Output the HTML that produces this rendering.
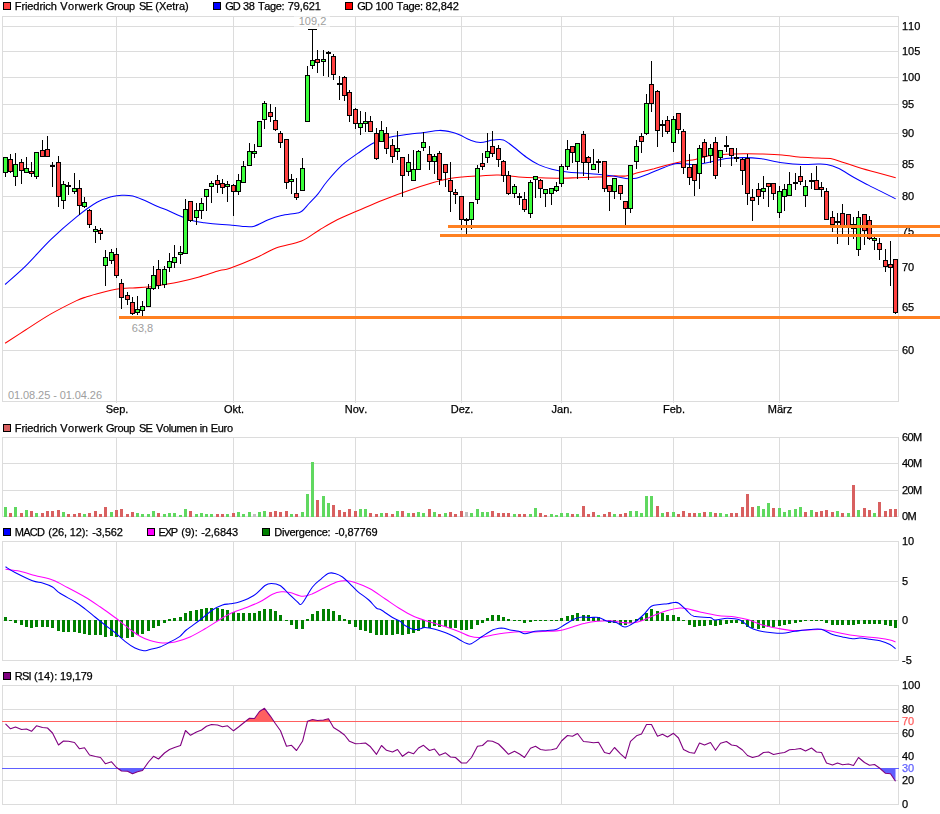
<!DOCTYPE html>
<html><head><meta charset="utf-8"><title>Chart</title>
<style>html,body{margin:0;padding:0;background:#fff}svg{display:block}text{font-family:"Liberation Sans",sans-serif;font-size:11px;fill:#000;font-kerning:none}.g{fill:#9e9e9e;stroke:none}.k{stroke:#000;stroke-width:.25px}</style></head><body>
<svg width="940" height="814" viewBox="0 0 940 814">
<rect width="940" height="814" fill="#fff"/>
<g shape-rendering="crispEdges"><rect x="2" y="26" width="897" height="1" fill="#dcdcdc"/><rect x="2" y="51" width="897" height="1" fill="#dcdcdc"/><rect x="2" y="77" width="897" height="1" fill="#dcdcdc"/><rect x="2" y="104" width="897" height="1" fill="#dcdcdc"/><rect x="2" y="133" width="897" height="1" fill="#dcdcdc"/><rect x="2" y="164" width="897" height="1" fill="#dcdcdc"/><rect x="2" y="196" width="897" height="1" fill="#dcdcdc"/><rect x="2" y="231" width="897" height="1" fill="#dcdcdc"/><rect x="2" y="267" width="897" height="1" fill="#dcdcdc"/><rect x="2" y="307" width="897" height="1" fill="#dcdcdc"/><rect x="2" y="350" width="897" height="1" fill="#dcdcdc"/><rect x="116" y="16" width="1" height="387" fill="#dcdcdc"/><rect x="233" y="16" width="1" height="387" fill="#dcdcdc"/><rect x="355" y="16" width="1" height="387" fill="#dcdcdc"/><rect x="461" y="16" width="1" height="387" fill="#dcdcdc"/><rect x="561" y="16" width="1" height="387" fill="#dcdcdc"/><rect x="673" y="16" width="1" height="387" fill="#dcdcdc"/><rect x="779" y="16" width="1" height="387" fill="#dcdcdc"/><rect x="2" y="16" width="897" height="1" fill="#dcdcdc"/><rect x="2" y="401" width="897" height="1" fill="#dcdcdc"/><rect x="2" y="16" width="1" height="386" fill="#dcdcdc"/><rect x="898" y="16" width="1" height="386" fill="#dcdcdc"/></g>
<text class="g" x="8" y="399" textLength="94" lengthAdjust="spacing">01.08.25 - 01.04.26</text>
<path fill="none" stroke="#ff0000" stroke-width="1.05" d="M5.1,343.3C8.5,341.1 17.9,334.9 25.5,330.0C33.1,325.1 42.5,318.8 51.0,313.9C59.5,309.0 70.6,303.5 76.6,300.6C82.6,297.8 82.5,298.2 86.8,296.8C91.0,295.4 97.0,293.8 102.1,292.5C107.2,291.2 112.3,289.9 117.4,289.1C122.5,288.3 127.7,288.2 132.8,287.9C137.9,287.6 143.0,287.6 148.1,287.1C153.2,286.6 158.3,285.7 163.4,284.8C168.5,283.9 172.8,283.3 178.7,282.0C184.6,280.7 192.3,278.8 199.1,276.9C205.9,275.0 214.4,271.9 219.6,270.5C224.8,269.1 224.0,270.4 230.0,268.3C236.0,266.2 247.8,261.5 255.5,258.1C263.2,254.7 268.3,250.8 276.0,247.9C283.7,245.1 294.3,244.0 301.5,241.0C308.7,238.0 313.4,233.5 319.4,230.0C325.3,226.5 330.8,223.0 337.2,219.8C343.6,216.6 350.0,214.1 357.7,210.8C365.4,207.5 374.7,203.3 383.2,199.9C391.7,196.5 400.2,193.3 408.7,190.4C417.2,187.5 427.4,184.3 434.2,182.3C441.0,180.3 444.9,179.3 449.6,178.4C454.3,177.5 457.2,177.3 462.3,176.9C467.4,176.5 474.4,176.2 480.4,175.9C486.4,175.6 491.9,174.9 498.3,175.1C504.7,175.3 512.3,176.5 518.7,176.9C525.1,177.3 530.2,177.5 536.6,177.7C543.0,177.9 550.2,178.2 557.0,178.2C563.8,178.2 570.6,177.9 577.4,177.7C584.2,177.5 591.9,177.4 597.9,177.1C603.9,176.8 608.5,176.1 613.2,175.9C617.9,175.7 621.6,176.5 625.9,175.9C630.1,175.3 634.0,173.7 638.7,172.5C643.4,171.3 648.9,170.0 654.0,168.7C659.1,167.3 664.3,165.7 669.4,164.4C674.5,163.1 680.4,161.9 684.7,161.1C689.0,160.3 691.0,160.3 695.3,159.4C699.6,158.5 705.5,156.3 710.6,155.5C715.7,154.7 720.5,154.6 726.0,154.3C731.5,154.0 737.8,153.8 743.8,153.7C749.8,153.6 755.3,153.8 761.7,154.0C768.1,154.2 775.3,154.4 782.1,155.0C788.9,155.6 796.5,156.8 802.5,157.3C808.5,157.8 813.2,157.9 817.9,158.1C822.6,158.3 826.4,157.9 830.6,158.6C834.9,159.3 838.7,160.9 843.4,162.4C848.1,163.9 853.2,165.8 858.7,167.5C864.2,169.2 870.4,170.9 876.6,172.6C882.8,174.3 892.5,176.8 895.7,177.7"/>
<path fill="none" stroke="#0000ff" stroke-width="1.05" d="M5.1,284.5C8.5,281.4 17.9,273.7 25.5,266.2C33.1,258.7 42.5,247.6 51.0,239.4C59.5,231.2 68.9,223.1 76.6,216.9C84.3,210.7 91.0,205.7 97.0,202.3C103.0,198.9 108.0,197.7 112.3,196.5C116.5,195.3 119.1,195.3 122.5,195.2C125.9,195.1 129.4,195.2 132.8,196.0C136.2,196.8 138.8,198.0 143.0,199.8C147.2,201.6 154.1,204.9 158.3,206.7C162.6,208.5 164.7,209.2 168.5,210.8C172.3,212.4 177.1,214.7 181.3,216.4C185.6,218.1 190.2,219.9 194.0,221.0C197.8,222.1 199.5,222.2 204.2,222.8C208.9,223.4 217.8,224.2 222.1,224.5C226.4,224.8 226.6,224.6 230.0,224.9C233.4,225.2 238.8,226.2 242.8,226.4C246.9,226.6 250.1,227.3 254.3,226.2C258.6,225.1 263.8,221.6 268.3,219.8C272.8,218.0 276.6,216.7 281.4,215.6C286.2,214.5 293.8,213.8 297.2,213.0C300.6,212.2 300.1,212.6 302.1,211.0C304.1,209.4 306.4,206.3 309.0,203.5C311.6,200.7 314.8,197.8 317.8,194.1C320.8,190.4 322.9,186.4 327.0,181.5C331.1,176.6 337.2,169.6 342.3,164.9C347.4,160.2 352.6,157.0 357.7,153.4C362.8,149.8 367.9,145.8 373.0,143.2C378.1,140.6 382.4,139.1 388.3,137.6C394.2,136.1 402.8,135.2 408.7,134.3C414.6,133.5 418.9,133.2 424.0,132.5C429.1,131.8 434.7,130.5 439.4,130.4C444.1,130.3 448.7,131.4 452.1,132.2C455.5,133.0 457.0,133.7 460.0,135.0C463.0,136.3 466.8,138.9 470.2,140.1C473.6,141.3 476.6,142.4 480.4,142.4C484.2,142.4 489.4,140.5 493.2,140.1C497.0,139.7 500.0,138.8 503.4,139.9C506.8,141.1 509.8,144.1 513.6,147.0C517.4,149.9 522.1,154.2 526.4,157.2C530.6,160.2 534.9,162.9 539.1,164.9C543.4,166.9 547.2,168.0 551.9,169.2C556.6,170.4 562.1,171.3 567.2,172.0C572.3,172.7 577.4,172.7 582.5,173.1C587.6,173.5 592.8,173.8 597.9,174.3C603.0,174.8 608.5,175.2 613.2,175.9C617.9,176.6 622.1,178.0 625.9,178.4C629.7,178.8 632.4,179.0 636.2,178.2C640.0,177.4 644.2,175.6 648.9,173.8C653.6,172.0 659.5,169.1 664.2,167.4C668.9,165.7 672.7,164.1 677.0,163.6C681.3,163.1 686.8,164.2 689.8,164.4C692.8,164.6 691.8,164.9 695.3,164.5C698.8,164.1 705.5,162.9 710.6,161.9C715.7,160.9 720.5,159.3 726.0,158.6C731.5,157.9 737.8,157.6 743.8,157.6C749.8,157.6 755.3,158.0 761.7,158.8C768.1,159.7 775.3,161.8 782.1,162.7C788.9,163.6 796.5,164.3 802.5,164.5C808.5,164.7 813.9,164.0 817.9,164.0C821.9,164.0 823.4,163.8 826.8,164.5C830.2,165.2 833.8,166.2 838.3,168.3C842.8,170.4 848.5,174.3 853.6,177.2C858.7,180.0 863.8,182.8 868.9,185.4C874.0,188.1 879.8,190.8 884.3,193.1C888.8,195.3 893.8,197.9 895.7,198.9"/>
<g shape-rendering="crispEdges"><rect x="5" y="157" width="1" height="20" fill="#000"/><rect x="3" y="157" width="5" height="16" fill="#000"/><rect x="4" y="158" width="3" height="14" fill="#3cff3c"/><rect x="10" y="154" width="1" height="19" fill="#000"/><rect x="8" y="159" width="5" height="13" fill="#000"/><rect x="9" y="160" width="3" height="11" fill="#ff4040"/><rect x="15" y="153" width="1" height="33" fill="#000"/><rect x="13" y="164" width="5" height="13" fill="#000"/><rect x="14" y="165" width="3" height="11" fill="#3cff3c"/><rect x="21" y="159" width="1" height="25" fill="#000"/><rect x="19" y="162" width="5" height="9" fill="#000"/><rect x="20" y="163" width="3" height="7" fill="#ff4040"/><rect x="26" y="157" width="1" height="16" fill="#000"/><rect x="24" y="168" width="5" height="5" fill="#000"/><rect x="25" y="169" width="3" height="3" fill="#3cff3c"/><rect x="31" y="162" width="1" height="15" fill="#000"/><rect x="29" y="171" width="5" height="3" fill="#000"/><rect x="30" y="172" width="3" height="1" fill="#ff4040"/><rect x="36" y="152" width="1" height="27" fill="#000"/><rect x="34" y="152" width="5" height="25" fill="#000"/><rect x="35" y="153" width="3" height="23" fill="#3cff3c"/><rect x="42" y="140" width="1" height="17" fill="#000"/><rect x="40" y="150" width="5" height="7" fill="#000"/><rect x="41" y="151" width="3" height="5" fill="#ff4040"/><rect x="47" y="136" width="1" height="21" fill="#000"/><rect x="45" y="149" width="5" height="8" fill="#000"/><rect x="46" y="150" width="3" height="6" fill="#ff4040"/><rect x="52" y="162" width="1" height="25" fill="#000"/><rect x="50" y="165" width="5" height="2" fill="#000"/><rect x="58" y="156" width="1" height="51" fill="#000"/><rect x="56" y="162" width="5" height="35" fill="#000"/><rect x="57" y="163" width="3" height="33" fill="#ff4040"/><rect x="63" y="181" width="1" height="28" fill="#000"/><rect x="61" y="184" width="5" height="17" fill="#000"/><rect x="62" y="185" width="3" height="15" fill="#3cff3c"/><rect x="68" y="182" width="1" height="13" fill="#000"/><rect x="66" y="185" width="5" height="2" fill="#000"/><rect x="74" y="173" width="1" height="21" fill="#000"/><rect x="72" y="188" width="5" height="4" fill="#000"/><rect x="73" y="189" width="3" height="2" fill="#3cff3c"/><rect x="79" y="180" width="1" height="35" fill="#000"/><rect x="77" y="188" width="5" height="18" fill="#000"/><rect x="78" y="189" width="3" height="16" fill="#ff4040"/><rect x="84" y="197" width="1" height="11" fill="#000"/><rect x="82" y="202" width="5" height="5" fill="#000"/><rect x="83" y="203" width="3" height="3" fill="#3cff3c"/><rect x="89" y="209" width="1" height="19" fill="#000"/><rect x="87" y="210" width="5" height="15" fill="#000"/><rect x="88" y="211" width="3" height="13" fill="#ff4040"/><rect x="95" y="226" width="1" height="17" fill="#000"/><rect x="93" y="229" width="5" height="3" fill="#000"/><rect x="94" y="230" width="3" height="1" fill="#3cff3c"/><rect x="100" y="228" width="1" height="12" fill="#000"/><rect x="98" y="230" width="5" height="4" fill="#000"/><rect x="99" y="231" width="3" height="2" fill="#ff4040"/><rect x="105" y="250" width="1" height="36" fill="#000"/><rect x="103" y="257" width="5" height="9" fill="#000"/><rect x="104" y="258" width="3" height="7" fill="#3cff3c"/><rect x="111" y="249" width="1" height="15" fill="#000"/><rect x="109" y="252" width="5" height="9" fill="#000"/><rect x="110" y="253" width="3" height="7" fill="#3cff3c"/><rect x="116" y="248" width="1" height="30" fill="#000"/><rect x="114" y="254" width="5" height="22" fill="#000"/><rect x="115" y="255" width="3" height="20" fill="#ff4040"/><rect x="121" y="279" width="1" height="30" fill="#000"/><rect x="119" y="283" width="5" height="15" fill="#000"/><rect x="120" y="284" width="3" height="13" fill="#ff4040"/><rect x="127" y="292" width="1" height="13" fill="#000"/><rect x="125" y="295" width="5" height="5" fill="#000"/><rect x="126" y="296" width="3" height="3" fill="#ff4040"/><rect x="132" y="297" width="1" height="18" fill="#000"/><rect x="130" y="302" width="5" height="12" fill="#000"/><rect x="131" y="303" width="3" height="10" fill="#ff4040"/><rect x="137" y="296" width="1" height="19" fill="#000"/><rect x="135" y="309" width="5" height="4" fill="#000"/><rect x="136" y="310" width="3" height="2" fill="#3cff3c"/><rect x="142" y="301" width="1" height="16" fill="#000"/><rect x="140" y="306" width="5" height="5" fill="#000"/><rect x="141" y="307" width="3" height="3" fill="#3cff3c"/><rect x="148" y="284" width="1" height="23" fill="#000"/><rect x="146" y="288" width="5" height="19" fill="#000"/><rect x="147" y="289" width="3" height="17" fill="#3cff3c"/><rect x="153" y="266" width="1" height="24" fill="#000"/><rect x="151" y="275" width="5" height="14" fill="#000"/><rect x="152" y="276" width="3" height="12" fill="#3cff3c"/><rect x="158" y="260" width="1" height="29" fill="#000"/><rect x="156" y="269" width="5" height="17" fill="#000"/><rect x="157" y="270" width="3" height="15" fill="#ff4040"/><rect x="164" y="266" width="1" height="22" fill="#000"/><rect x="162" y="269" width="5" height="16" fill="#000"/><rect x="163" y="270" width="3" height="14" fill="#3cff3c"/><rect x="169" y="253" width="1" height="19" fill="#000"/><rect x="167" y="261" width="5" height="7" fill="#000"/><rect x="168" y="262" width="3" height="5" fill="#3cff3c"/><rect x="174" y="245" width="1" height="23" fill="#000"/><rect x="172" y="257" width="5" height="6" fill="#000"/><rect x="173" y="258" width="3" height="4" fill="#3cff3c"/><rect x="180" y="246" width="1" height="18" fill="#000"/><rect x="178" y="252" width="5" height="3" fill="#000"/><rect x="179" y="253" width="3" height="1" fill="#3cff3c"/><rect x="185" y="199" width="1" height="55" fill="#000"/><rect x="183" y="209" width="5" height="45" fill="#000"/><rect x="184" y="210" width="3" height="43" fill="#3cff3c"/><rect x="190" y="201" width="1" height="21" fill="#000"/><rect x="188" y="201" width="5" height="20" fill="#000"/><rect x="189" y="202" width="3" height="18" fill="#ff4040"/><rect x="196" y="203" width="1" height="22" fill="#000"/><rect x="194" y="210" width="5" height="8" fill="#000"/><rect x="195" y="211" width="3" height="6" fill="#3cff3c"/><rect x="201" y="198" width="1" height="21" fill="#000"/><rect x="199" y="203" width="5" height="8" fill="#000"/><rect x="200" y="204" width="3" height="6" fill="#3cff3c"/><rect x="206" y="189" width="1" height="22" fill="#000"/><rect x="204" y="189" width="5" height="8" fill="#000"/><rect x="205" y="190" width="3" height="6" fill="#3cff3c"/><rect x="211" y="181" width="1" height="22" fill="#000"/><rect x="209" y="183" width="5" height="4" fill="#000"/><rect x="210" y="184" width="3" height="2" fill="#3cff3c"/><rect x="217" y="175" width="1" height="18" fill="#000"/><rect x="215" y="180" width="5" height="5" fill="#000"/><rect x="216" y="181" width="3" height="3" fill="#ff4040"/><rect x="222" y="179" width="1" height="15" fill="#000"/><rect x="220" y="183" width="5" height="5" fill="#000"/><rect x="221" y="184" width="3" height="3" fill="#ff4040"/><rect x="227" y="181" width="1" height="21" fill="#000"/><rect x="225" y="184" width="5" height="3" fill="#000"/><rect x="226" y="185" width="3" height="1" fill="#3cff3c"/><rect x="233" y="184" width="1" height="32" fill="#000"/><rect x="231" y="185" width="5" height="7" fill="#000"/><rect x="232" y="186" width="3" height="5" fill="#ff4040"/><rect x="238" y="174" width="1" height="21" fill="#000"/><rect x="236" y="180" width="5" height="12" fill="#000"/><rect x="237" y="181" width="3" height="10" fill="#3cff3c"/><rect x="243" y="161" width="1" height="22" fill="#000"/><rect x="241" y="166" width="5" height="17" fill="#000"/><rect x="242" y="167" width="3" height="15" fill="#3cff3c"/><rect x="249" y="143" width="1" height="23" fill="#000"/><rect x="247" y="151" width="5" height="15" fill="#000"/><rect x="248" y="152" width="3" height="13" fill="#3cff3c"/><rect x="254" y="144" width="1" height="14" fill="#000"/><rect x="252" y="151" width="5" height="3" fill="#000"/><rect x="253" y="152" width="3" height="1" fill="#3cff3c"/><rect x="259" y="121" width="1" height="26" fill="#000"/><rect x="257" y="121" width="5" height="26" fill="#000"/><rect x="258" y="122" width="3" height="24" fill="#3cff3c"/><rect x="264" y="101" width="1" height="28" fill="#000"/><rect x="262" y="103" width="5" height="17" fill="#000"/><rect x="263" y="104" width="3" height="15" fill="#3cff3c"/><rect x="270" y="104" width="1" height="18" fill="#000"/><rect x="268" y="112" width="5" height="5" fill="#000"/><rect x="269" y="113" width="3" height="3" fill="#ff4040"/><rect x="275" y="107" width="1" height="24" fill="#000"/><rect x="273" y="120" width="5" height="10" fill="#000"/><rect x="274" y="121" width="3" height="8" fill="#ff4040"/><rect x="280" y="131" width="1" height="17" fill="#000"/><rect x="278" y="133" width="5" height="10" fill="#000"/><rect x="279" y="134" width="3" height="8" fill="#ff4040"/><rect x="286" y="139" width="1" height="50" fill="#000"/><rect x="284" y="139" width="5" height="44" fill="#000"/><rect x="285" y="140" width="3" height="42" fill="#ff4040"/><rect x="291" y="174" width="1" height="20" fill="#000"/><rect x="289" y="179" width="5" height="3" fill="#000"/><rect x="290" y="180" width="3" height="1" fill="#3cff3c"/><rect x="296" y="178" width="1" height="22" fill="#000"/><rect x="294" y="193" width="5" height="5" fill="#000"/><rect x="295" y="194" width="3" height="3" fill="#ff4040"/><rect x="302" y="158" width="1" height="33" fill="#000"/><rect x="300" y="168" width="5" height="23" fill="#000"/><rect x="301" y="169" width="3" height="21" fill="#3cff3c"/><rect x="307" y="66" width="1" height="56" fill="#000"/><rect x="305" y="75" width="5" height="47" fill="#000"/><rect x="306" y="76" width="3" height="45" fill="#3cff3c"/><rect x="312" y="29" width="1" height="40" fill="#000"/><rect x="310" y="60" width="5" height="6" fill="#000"/><rect x="311" y="61" width="3" height="4" fill="#3cff3c"/><rect x="317" y="50" width="1" height="23" fill="#000"/><rect x="315" y="59" width="5" height="4" fill="#000"/><rect x="316" y="60" width="3" height="2" fill="#ff4040"/><rect x="323" y="50" width="1" height="26" fill="#000"/><rect x="321" y="59" width="5" height="3" fill="#000"/><rect x="322" y="60" width="3" height="1" fill="#3cff3c"/><rect x="328" y="51" width="1" height="26" fill="#000"/><rect x="326" y="52" width="5" height="2" fill="#000"/><rect x="333" y="54" width="1" height="26" fill="#000"/><rect x="331" y="56" width="5" height="19" fill="#000"/><rect x="332" y="57" width="3" height="17" fill="#ff4040"/><rect x="339" y="76" width="1" height="24" fill="#000"/><rect x="337" y="83" width="5" height="2" fill="#000"/><rect x="344" y="76" width="1" height="25" fill="#000"/><rect x="342" y="77" width="5" height="19" fill="#000"/><rect x="343" y="78" width="3" height="17" fill="#ff4040"/><rect x="349" y="90" width="1" height="32" fill="#000"/><rect x="347" y="92" width="5" height="24" fill="#000"/><rect x="348" y="93" width="3" height="22" fill="#ff4040"/><rect x="355" y="108" width="1" height="21" fill="#000"/><rect x="353" y="109" width="5" height="15" fill="#000"/><rect x="354" y="110" width="3" height="13" fill="#ff4040"/><rect x="360" y="111" width="1" height="24" fill="#000"/><rect x="358" y="123" width="5" height="5" fill="#000"/><rect x="359" y="124" width="3" height="3" fill="#3cff3c"/><rect x="365" y="112" width="1" height="20" fill="#000"/><rect x="363" y="121" width="5" height="3" fill="#000"/><rect x="364" y="122" width="3" height="1" fill="#3cff3c"/><rect x="370" y="116" width="1" height="16" fill="#000"/><rect x="368" y="121" width="5" height="11" fill="#000"/><rect x="369" y="122" width="3" height="9" fill="#ff4040"/><rect x="376" y="128" width="1" height="32" fill="#000"/><rect x="374" y="133" width="5" height="26" fill="#000"/><rect x="375" y="134" width="3" height="24" fill="#ff4040"/><rect x="381" y="121" width="1" height="21" fill="#000"/><rect x="379" y="130" width="5" height="12" fill="#000"/><rect x="380" y="131" width="3" height="10" fill="#3cff3c"/><rect x="386" y="127" width="1" height="27" fill="#000"/><rect x="384" y="133" width="5" height="16" fill="#000"/><rect x="385" y="134" width="3" height="14" fill="#ff4040"/><rect x="392" y="139" width="1" height="24" fill="#000"/><rect x="390" y="145" width="5" height="12" fill="#000"/><rect x="391" y="146" width="3" height="10" fill="#ff4040"/><rect x="397" y="131" width="1" height="29" fill="#000"/><rect x="395" y="148" width="5" height="4" fill="#000"/><rect x="396" y="149" width="3" height="2" fill="#3cff3c"/><rect x="402" y="157" width="1" height="40" fill="#000"/><rect x="400" y="157" width="5" height="19" fill="#000"/><rect x="401" y="158" width="3" height="17" fill="#ff4040"/><rect x="408" y="154" width="1" height="22" fill="#000"/><rect x="406" y="162" width="5" height="10" fill="#000"/><rect x="407" y="163" width="3" height="8" fill="#3cff3c"/><rect x="413" y="150" width="1" height="31" fill="#000"/><rect x="411" y="169" width="5" height="12" fill="#000"/><rect x="412" y="170" width="3" height="10" fill="#3cff3c"/><rect x="418" y="150" width="1" height="20" fill="#000"/><rect x="416" y="151" width="5" height="19" fill="#000"/><rect x="417" y="152" width="3" height="17" fill="#3cff3c"/><rect x="423" y="132" width="1" height="19" fill="#000"/><rect x="421" y="142" width="5" height="6" fill="#000"/><rect x="422" y="143" width="3" height="4" fill="#3cff3c"/><rect x="429" y="146" width="1" height="24" fill="#000"/><rect x="427" y="154" width="5" height="8" fill="#000"/><rect x="428" y="155" width="3" height="6" fill="#ff4040"/><rect x="434" y="154" width="1" height="20" fill="#000"/><rect x="432" y="156" width="5" height="6" fill="#000"/><rect x="433" y="157" width="3" height="4" fill="#3cff3c"/><rect x="439" y="151" width="1" height="34" fill="#000"/><rect x="437" y="153" width="5" height="27" fill="#000"/><rect x="438" y="154" width="3" height="25" fill="#ff4040"/><rect x="445" y="164" width="1" height="23" fill="#000"/><rect x="443" y="164" width="5" height="9" fill="#000"/><rect x="444" y="165" width="3" height="7" fill="#ff4040"/><rect x="450" y="162" width="1" height="50" fill="#000"/><rect x="448" y="180" width="5" height="12" fill="#000"/><rect x="449" y="181" width="3" height="10" fill="#ff4040"/><rect x="455" y="189" width="1" height="15" fill="#000"/><rect x="453" y="192" width="5" height="3" fill="#000"/><rect x="454" y="193" width="3" height="1" fill="#ff4040"/><rect x="461" y="196" width="1" height="34" fill="#000"/><rect x="459" y="196" width="5" height="24" fill="#000"/><rect x="460" y="197" width="3" height="22" fill="#ff4040"/><rect x="466" y="218" width="1" height="17" fill="#000"/><rect x="464" y="219" width="5" height="2" fill="#000"/><rect x="471" y="202" width="1" height="27" fill="#000"/><rect x="469" y="202" width="5" height="18" fill="#000"/><rect x="470" y="203" width="3" height="16" fill="#3cff3c"/><rect x="477" y="165" width="1" height="39" fill="#000"/><rect x="475" y="168" width="5" height="32" fill="#000"/><rect x="476" y="169" width="3" height="30" fill="#3cff3c"/><rect x="482" y="153" width="1" height="17" fill="#000"/><rect x="480" y="163" width="5" height="4" fill="#000"/><rect x="481" y="164" width="3" height="2" fill="#ff4040"/><rect x="487" y="133" width="1" height="30" fill="#000"/><rect x="485" y="151" width="5" height="7" fill="#000"/><rect x="486" y="152" width="3" height="5" fill="#3cff3c"/><rect x="492" y="131" width="1" height="26" fill="#000"/><rect x="490" y="146" width="5" height="8" fill="#000"/><rect x="491" y="147" width="3" height="6" fill="#ff4040"/><rect x="498" y="145" width="1" height="22" fill="#000"/><rect x="496" y="148" width="5" height="12" fill="#000"/><rect x="497" y="149" width="3" height="10" fill="#ff4040"/><rect x="503" y="160" width="1" height="22" fill="#000"/><rect x="501" y="161" width="5" height="15" fill="#000"/><rect x="502" y="162" width="3" height="13" fill="#ff4040"/><rect x="508" y="171" width="1" height="24" fill="#000"/><rect x="506" y="175" width="5" height="19" fill="#000"/><rect x="507" y="176" width="3" height="17" fill="#ff4040"/><rect x="514" y="184" width="1" height="14" fill="#000"/><rect x="512" y="186" width="5" height="8" fill="#000"/><rect x="513" y="187" width="3" height="6" fill="#3cff3c"/><rect x="519" y="193" width="1" height="12" fill="#000"/><rect x="517" y="196" width="5" height="2" fill="#000"/><rect x="524" y="192" width="1" height="20" fill="#000"/><rect x="522" y="199" width="5" height="11" fill="#000"/><rect x="523" y="200" width="3" height="9" fill="#ff4040"/><rect x="530" y="180" width="1" height="38" fill="#000"/><rect x="528" y="182" width="5" height="32" fill="#000"/><rect x="529" y="183" width="3" height="30" fill="#3cff3c"/><rect x="535" y="176" width="1" height="22" fill="#000"/><rect x="533" y="176" width="5" height="4" fill="#000"/><rect x="534" y="177" width="3" height="2" fill="#3cff3c"/><rect x="540" y="179" width="1" height="19" fill="#000"/><rect x="538" y="180" width="5" height="9" fill="#000"/><rect x="539" y="181" width="3" height="7" fill="#ff4040"/><rect x="545" y="189" width="1" height="18" fill="#000"/><rect x="543" y="189" width="5" height="5" fill="#000"/><rect x="544" y="190" width="3" height="3" fill="#3cff3c"/><rect x="551" y="188" width="1" height="17" fill="#000"/><rect x="549" y="188" width="5" height="6" fill="#000"/><rect x="550" y="189" width="3" height="4" fill="#3cff3c"/><rect x="556" y="182" width="1" height="10" fill="#000"/><rect x="554" y="186" width="5" height="5" fill="#000"/><rect x="555" y="187" width="3" height="3" fill="#3cff3c"/><rect x="561" y="164" width="1" height="23" fill="#000"/><rect x="559" y="166" width="5" height="18" fill="#000"/><rect x="560" y="167" width="3" height="16" fill="#3cff3c"/><rect x="567" y="140" width="1" height="30" fill="#000"/><rect x="565" y="149" width="5" height="18" fill="#000"/><rect x="566" y="150" width="3" height="16" fill="#3cff3c"/><rect x="572" y="146" width="1" height="17" fill="#000"/><rect x="570" y="146" width="5" height="7" fill="#000"/><rect x="571" y="147" width="3" height="5" fill="#ff4040"/><rect x="577" y="143" width="1" height="36" fill="#000"/><rect x="575" y="143" width="5" height="19" fill="#000"/><rect x="576" y="144" width="3" height="17" fill="#3cff3c"/><rect x="583" y="131" width="1" height="45" fill="#000"/><rect x="581" y="134" width="5" height="29" fill="#000"/><rect x="582" y="135" width="3" height="27" fill="#ff4040"/><rect x="588" y="156" width="1" height="24" fill="#000"/><rect x="586" y="157" width="5" height="6" fill="#000"/><rect x="587" y="158" width="3" height="4" fill="#ff4040"/><rect x="593" y="149" width="1" height="21" fill="#000"/><rect x="591" y="164" width="5" height="6" fill="#000"/><rect x="592" y="165" width="3" height="4" fill="#3cff3c"/><rect x="598" y="159" width="1" height="14" fill="#000"/><rect x="596" y="161" width="5" height="2" fill="#000"/><rect x="604" y="161" width="1" height="31" fill="#000"/><rect x="602" y="161" width="5" height="28" fill="#000"/><rect x="603" y="162" width="3" height="26" fill="#ff4040"/><rect x="609" y="185" width="1" height="26" fill="#000"/><rect x="607" y="185" width="5" height="7" fill="#000"/><rect x="608" y="186" width="3" height="5" fill="#ff4040"/><rect x="614" y="178" width="1" height="21" fill="#000"/><rect x="612" y="178" width="5" height="14" fill="#000"/><rect x="613" y="179" width="3" height="12" fill="#3cff3c"/><rect x="620" y="185" width="1" height="15" fill="#000"/><rect x="618" y="185" width="5" height="9" fill="#000"/><rect x="619" y="186" width="3" height="7" fill="#ff4040"/><rect x="625" y="201" width="1" height="24" fill="#000"/><rect x="623" y="201" width="5" height="8" fill="#000"/><rect x="624" y="202" width="3" height="6" fill="#ff4040"/><rect x="630" y="165" width="1" height="48" fill="#000"/><rect x="628" y="165" width="5" height="44" fill="#000"/><rect x="629" y="166" width="3" height="42" fill="#3cff3c"/><rect x="636" y="140" width="1" height="29" fill="#000"/><rect x="634" y="146" width="5" height="16" fill="#000"/><rect x="635" y="147" width="3" height="14" fill="#3cff3c"/><rect x="641" y="133" width="1" height="20" fill="#000"/><rect x="639" y="136" width="5" height="6" fill="#000"/><rect x="640" y="137" width="3" height="4" fill="#ff4040"/><rect x="646" y="94" width="1" height="41" fill="#000"/><rect x="644" y="103" width="5" height="31" fill="#000"/><rect x="645" y="104" width="3" height="29" fill="#3cff3c"/><rect x="651" y="61" width="1" height="51" fill="#000"/><rect x="649" y="84" width="5" height="20" fill="#000"/><rect x="650" y="85" width="3" height="18" fill="#ff4040"/><rect x="657" y="90" width="1" height="57" fill="#000"/><rect x="655" y="91" width="5" height="40" fill="#000"/><rect x="656" y="92" width="3" height="38" fill="#ff4040"/><rect x="662" y="120" width="1" height="17" fill="#000"/><rect x="660" y="124" width="5" height="2" fill="#000"/><rect x="667" y="116" width="1" height="18" fill="#000"/><rect x="665" y="120" width="5" height="12" fill="#000"/><rect x="666" y="121" width="3" height="10" fill="#ff4040"/><rect x="673" y="116" width="1" height="36" fill="#000"/><rect x="671" y="119" width="5" height="24" fill="#000"/><rect x="672" y="120" width="3" height="22" fill="#3cff3c"/><rect x="678" y="113" width="1" height="21" fill="#000"/><rect x="676" y="113" width="5" height="17" fill="#000"/><rect x="677" y="114" width="3" height="15" fill="#ff4040"/><rect x="683" y="129" width="1" height="45" fill="#000"/><rect x="681" y="131" width="5" height="37" fill="#000"/><rect x="682" y="132" width="3" height="35" fill="#ff4040"/><rect x="689" y="154" width="1" height="31" fill="#000"/><rect x="687" y="167" width="5" height="11" fill="#000"/><rect x="688" y="168" width="3" height="9" fill="#ff4040"/><rect x="694" y="164" width="1" height="32" fill="#000"/><rect x="692" y="164" width="5" height="17" fill="#000"/><rect x="693" y="165" width="3" height="15" fill="#ff4040"/><rect x="699" y="145" width="1" height="44" fill="#000"/><rect x="697" y="148" width="5" height="26" fill="#000"/><rect x="698" y="149" width="3" height="24" fill="#3cff3c"/><rect x="704" y="139" width="1" height="24" fill="#000"/><rect x="702" y="142" width="5" height="15" fill="#000"/><rect x="703" y="143" width="3" height="13" fill="#ff4040"/><rect x="710" y="144" width="1" height="19" fill="#000"/><rect x="708" y="148" width="5" height="8" fill="#000"/><rect x="709" y="149" width="3" height="6" fill="#3cff3c"/><rect x="715" y="137" width="1" height="42" fill="#000"/><rect x="713" y="142" width="5" height="34" fill="#000"/><rect x="714" y="143" width="3" height="32" fill="#ff4040"/><rect x="720" y="150" width="1" height="17" fill="#000"/><rect x="718" y="150" width="5" height="8" fill="#000"/><rect x="719" y="151" width="3" height="6" fill="#3cff3c"/><rect x="726" y="136" width="1" height="16" fill="#000"/><rect x="724" y="145" width="5" height="2" fill="#000"/><rect x="731" y="148" width="1" height="18" fill="#000"/><rect x="729" y="148" width="5" height="8" fill="#000"/><rect x="730" y="149" width="3" height="6" fill="#ff4040"/><rect x="736" y="148" width="1" height="14" fill="#000"/><rect x="734" y="157" width="5" height="2" fill="#000"/><rect x="742" y="158" width="1" height="27" fill="#000"/><rect x="740" y="159" width="5" height="12" fill="#000"/><rect x="741" y="160" width="3" height="10" fill="#ff4040"/><rect x="747" y="154" width="1" height="51" fill="#000"/><rect x="745" y="158" width="5" height="36" fill="#000"/><rect x="746" y="159" width="3" height="34" fill="#ff4040"/><rect x="752" y="189" width="1" height="32" fill="#000"/><rect x="750" y="197" width="5" height="4" fill="#000"/><rect x="751" y="198" width="3" height="2" fill="#ff4040"/><rect x="758" y="183" width="1" height="22" fill="#000"/><rect x="756" y="189" width="5" height="8" fill="#000"/><rect x="757" y="190" width="3" height="6" fill="#ff4040"/><rect x="763" y="176" width="1" height="23" fill="#000"/><rect x="761" y="188" width="5" height="4" fill="#000"/><rect x="762" y="189" width="3" height="2" fill="#3cff3c"/><rect x="768" y="183" width="1" height="24" fill="#000"/><rect x="766" y="183" width="5" height="4" fill="#000"/><rect x="767" y="184" width="3" height="2" fill="#ff4040"/><rect x="773" y="183" width="1" height="17" fill="#000"/><rect x="771" y="183" width="5" height="11" fill="#000"/><rect x="772" y="184" width="3" height="9" fill="#ff4040"/><rect x="779" y="186" width="1" height="32" fill="#000"/><rect x="777" y="191" width="5" height="22" fill="#000"/><rect x="778" y="192" width="3" height="20" fill="#3cff3c"/><rect x="784" y="184" width="1" height="27" fill="#000"/><rect x="782" y="189" width="5" height="8" fill="#000"/><rect x="783" y="190" width="3" height="6" fill="#3cff3c"/><rect x="789" y="172" width="1" height="24" fill="#000"/><rect x="787" y="184" width="5" height="12" fill="#000"/><rect x="788" y="185" width="3" height="10" fill="#3cff3c"/><rect x="795" y="173" width="1" height="17" fill="#000"/><rect x="793" y="182" width="5" height="2" fill="#000"/><rect x="800" y="166" width="1" height="19" fill="#000"/><rect x="798" y="176" width="5" height="6" fill="#000"/><rect x="799" y="177" width="3" height="4" fill="#ff4040"/><rect x="805" y="180" width="1" height="27" fill="#000"/><rect x="803" y="186" width="5" height="10" fill="#000"/><rect x="804" y="187" width="3" height="8" fill="#3cff3c"/><rect x="811" y="173" width="1" height="16" fill="#000"/><rect x="809" y="180" width="5" height="2" fill="#000"/><rect x="816" y="166" width="1" height="24" fill="#000"/><rect x="814" y="180" width="5" height="10" fill="#000"/><rect x="815" y="181" width="3" height="8" fill="#ff4040"/><rect x="821" y="182" width="1" height="15" fill="#000"/><rect x="819" y="187" width="5" height="3" fill="#000"/><rect x="820" y="188" width="3" height="1" fill="#ff4040"/><rect x="826" y="188" width="1" height="32" fill="#000"/><rect x="824" y="191" width="5" height="29" fill="#000"/><rect x="825" y="192" width="3" height="27" fill="#ff4040"/><rect x="832" y="211" width="1" height="21" fill="#000"/><rect x="830" y="217" width="5" height="8" fill="#000"/><rect x="831" y="218" width="3" height="6" fill="#ff4040"/><rect x="837" y="213" width="1" height="31" fill="#000"/><rect x="835" y="221" width="5" height="2" fill="#000"/><rect x="842" y="204" width="1" height="30" fill="#000"/><rect x="840" y="213" width="5" height="13" fill="#000"/><rect x="841" y="214" width="3" height="11" fill="#ff4040"/><rect x="848" y="214" width="1" height="31" fill="#000"/><rect x="846" y="214" width="5" height="12" fill="#000"/><rect x="847" y="215" width="3" height="10" fill="#ff4040"/><rect x="853" y="217" width="1" height="22" fill="#000"/><rect x="851" y="224" width="5" height="5" fill="#000"/><rect x="852" y="225" width="3" height="3" fill="#ff4040"/><rect x="858" y="211" width="1" height="45" fill="#000"/><rect x="856" y="217" width="5" height="33" fill="#000"/><rect x="857" y="218" width="3" height="31" fill="#3cff3c"/><rect x="864" y="214" width="1" height="31" fill="#000"/><rect x="862" y="214" width="5" height="17" fill="#000"/><rect x="863" y="215" width="3" height="15" fill="#ff4040"/><rect x="869" y="216" width="1" height="24" fill="#000"/><rect x="867" y="220" width="5" height="19" fill="#000"/><rect x="868" y="221" width="3" height="17" fill="#ff4040"/><rect x="874" y="237" width="1" height="13" fill="#000"/><rect x="872" y="238" width="5" height="3" fill="#000"/><rect x="873" y="239" width="3" height="1" fill="#3cff3c"/><rect x="879" y="238" width="1" height="22" fill="#000"/><rect x="877" y="243" width="5" height="7" fill="#000"/><rect x="878" y="244" width="3" height="5" fill="#ff4040"/><rect x="885" y="249" width="1" height="23" fill="#000"/><rect x="883" y="260" width="5" height="7" fill="#000"/><rect x="884" y="261" width="3" height="5" fill="#ff4040"/><rect x="890" y="241" width="1" height="45" fill="#000"/><rect x="888" y="264" width="5" height="4" fill="#000"/><rect x="889" y="265" width="3" height="2" fill="#ff4040"/><rect x="895" y="259" width="1" height="55" fill="#000"/><rect x="893" y="259" width="5" height="54" fill="#000"/><rect x="894" y="260" width="3" height="52" fill="#ff4040"/><rect x="308" y="29" width="9" height="1" fill="#000"/></g>
<rect x="294" y="14" width="36" height="14" fill="#fff" fill-opacity="0.5"/><text class="g" x="312.5" y="25" text-anchor="middle">109,2</text>
<text class="g" x="142.5" y="332" text-anchor="middle">63,8</text>
<rect x="3.5" y="2.5" width="7" height="7" fill="#ff4040" stroke="#000" stroke-width="1" shape-rendering="crispEdges"/>
<rect x="213.5" y="2.5" width="7" height="7" fill="#0000ff" stroke="#000" stroke-width="1" shape-rendering="crispEdges"/>
<rect x="345.5" y="2.5" width="7" height="7" fill="#ff0000" stroke="#000" stroke-width="1" shape-rendering="crispEdges"/>
<g shape-rendering="crispEdges"><rect x="2" y="463" width="897" height="1" fill="#dcdcdc"/><rect x="2" y="490" width="897" height="1" fill="#dcdcdc"/><rect x="116" y="437" width="1" height="80" fill="#dcdcdc"/><rect x="233" y="437" width="1" height="80" fill="#dcdcdc"/><rect x="355" y="437" width="1" height="80" fill="#dcdcdc"/><rect x="461" y="437" width="1" height="80" fill="#dcdcdc"/><rect x="561" y="437" width="1" height="80" fill="#dcdcdc"/><rect x="673" y="437" width="1" height="80" fill="#dcdcdc"/><rect x="779" y="437" width="1" height="80" fill="#dcdcdc"/><rect x="2" y="437" width="897" height="1" fill="#dcdcdc"/><rect x="2" y="516" width="897" height="1" fill="#dcdcdc"/><rect x="2" y="437" width="1" height="80" fill="#dcdcdc"/><rect x="898" y="437" width="1" height="80" fill="#dcdcdc"/></g>
<g shape-rendering="crispEdges"><rect x="4" y="507" width="3" height="10" fill="#60d860"/><rect x="9" y="513" width="3" height="4" fill="#d86060"/><rect x="14" y="507" width="3" height="10" fill="#60d860"/><rect x="20" y="513" width="3" height="4" fill="#d86060"/><rect x="25" y="510" width="3" height="7" fill="#60d860"/><rect x="30" y="511" width="3" height="6" fill="#d86060"/><rect x="35" y="513" width="3" height="4" fill="#60d860"/><rect x="41" y="513" width="3" height="4" fill="#d86060"/><rect x="46" y="511" width="3" height="6" fill="#d86060"/><rect x="51" y="511" width="3" height="6" fill="#d86060"/><rect x="57" y="510" width="3" height="7" fill="#d86060"/><rect x="62" y="512" width="3" height="5" fill="#60d860"/><rect x="67" y="514" width="3" height="3" fill="#d86060"/><rect x="73" y="514" width="3" height="3" fill="#d86060"/><rect x="78" y="513" width="3" height="4" fill="#d86060"/><rect x="83" y="514" width="3" height="3" fill="#60d860"/><rect x="88" y="513" width="3" height="4" fill="#d86060"/><rect x="94" y="511" width="3" height="6" fill="#d86060"/><rect x="99" y="514" width="3" height="3" fill="#d86060"/><rect x="104" y="507" width="3" height="10" fill="#d86060"/><rect x="110" y="512" width="3" height="5" fill="#60d860"/><rect x="115" y="510" width="3" height="7" fill="#d86060"/><rect x="120" y="509" width="3" height="8" fill="#d86060"/><rect x="126" y="514" width="3" height="3" fill="#d86060"/><rect x="131" y="512" width="3" height="5" fill="#d86060"/><rect x="136" y="513" width="3" height="4" fill="#60d860"/><rect x="141" y="514" width="3" height="3" fill="#60d860"/><rect x="147" y="514" width="3" height="3" fill="#60d860"/><rect x="152" y="511" width="3" height="6" fill="#60d860"/><rect x="157" y="513" width="3" height="4" fill="#d86060"/><rect x="163" y="514" width="3" height="3" fill="#60d860"/><rect x="168" y="513" width="3" height="4" fill="#60d860"/><rect x="173" y="513" width="3" height="4" fill="#60d860"/><rect x="179" y="515" width="3" height="2" fill="#60d860"/><rect x="184" y="509" width="3" height="8" fill="#60d860"/><rect x="189" y="511" width="3" height="6" fill="#d86060"/><rect x="195" y="514" width="3" height="3" fill="#60d860"/><rect x="200" y="513" width="3" height="4" fill="#60d860"/><rect x="205" y="514" width="3" height="3" fill="#60d860"/><rect x="210" y="514" width="3" height="3" fill="#60d860"/><rect x="216" y="514" width="3" height="3" fill="#d86060"/><rect x="221" y="514" width="3" height="3" fill="#d86060"/><rect x="226" y="514" width="3" height="3" fill="#60d860"/><rect x="232" y="513" width="3" height="4" fill="#d86060"/><rect x="237" y="512" width="3" height="5" fill="#60d860"/><rect x="242" y="514" width="3" height="3" fill="#60d860"/><rect x="248" y="512" width="3" height="5" fill="#60d860"/><rect x="253" y="514" width="3" height="3" fill="#c0c0c0"/><rect x="258" y="512" width="3" height="5" fill="#60d860"/><rect x="263" y="511" width="3" height="6" fill="#60d860"/><rect x="269" y="512" width="3" height="5" fill="#d86060"/><rect x="274" y="511" width="3" height="6" fill="#d86060"/><rect x="279" y="512" width="3" height="5" fill="#d86060"/><rect x="285" y="511" width="3" height="6" fill="#d86060"/><rect x="290" y="514" width="3" height="3" fill="#60d860"/><rect x="295" y="514" width="3" height="3" fill="#d86060"/><rect x="301" y="512" width="3" height="5" fill="#60d860"/><rect x="306" y="494" width="3" height="23" fill="#60d860"/><rect x="311" y="462" width="3" height="55" fill="#60d860"/><rect x="316" y="500" width="3" height="17" fill="#d86060"/><rect x="322" y="496" width="3" height="21" fill="#60d860"/><rect x="327" y="503" width="3" height="14" fill="#60d860"/><rect x="332" y="505" width="3" height="12" fill="#d86060"/><rect x="338" y="510" width="3" height="7" fill="#d86060"/><rect x="343" y="512" width="3" height="5" fill="#d86060"/><rect x="348" y="509" width="3" height="8" fill="#d86060"/><rect x="354" y="511" width="3" height="6" fill="#d86060"/><rect x="359" y="509" width="3" height="8" fill="#60d860"/><rect x="364" y="509" width="3" height="8" fill="#60d860"/><rect x="369" y="513" width="3" height="4" fill="#d86060"/><rect x="375" y="514" width="3" height="3" fill="#d86060"/><rect x="380" y="513" width="3" height="4" fill="#60d860"/><rect x="385" y="513" width="3" height="4" fill="#d86060"/><rect x="391" y="514" width="3" height="3" fill="#d86060"/><rect x="396" y="511" width="3" height="6" fill="#60d860"/><rect x="401" y="511" width="3" height="6" fill="#d86060"/><rect x="407" y="513" width="3" height="4" fill="#60d860"/><rect x="412" y="513" width="3" height="4" fill="#d86060"/><rect x="417" y="512" width="3" height="5" fill="#60d860"/><rect x="422" y="513" width="3" height="4" fill="#60d860"/><rect x="428" y="509" width="3" height="8" fill="#d86060"/><rect x="433" y="512" width="3" height="5" fill="#60d860"/><rect x="438" y="514" width="3" height="3" fill="#d86060"/><rect x="444" y="513" width="3" height="4" fill="#60d860"/><rect x="449" y="512" width="3" height="5" fill="#d86060"/><rect x="454" y="514" width="3" height="3" fill="#d86060"/><rect x="460" y="511" width="3" height="6" fill="#d86060"/><rect x="465" y="512" width="3" height="5" fill="#c0c0c0"/><rect x="470" y="513" width="3" height="4" fill="#60d860"/><rect x="476" y="509" width="3" height="8" fill="#60d860"/><rect x="481" y="512" width="3" height="5" fill="#60d860"/><rect x="486" y="512" width="3" height="5" fill="#60d860"/><rect x="491" y="511" width="3" height="6" fill="#d86060"/><rect x="497" y="513" width="3" height="4" fill="#d86060"/><rect x="502" y="513" width="3" height="4" fill="#d86060"/><rect x="507" y="513" width="3" height="4" fill="#d86060"/><rect x="513" y="514" width="3" height="3" fill="#60d860"/><rect x="518" y="514" width="3" height="3" fill="#d86060"/><rect x="523" y="514" width="3" height="3" fill="#d86060"/><rect x="529" y="514" width="3" height="3" fill="#60d860"/><rect x="534" y="508" width="3" height="9" fill="#60d860"/><rect x="539" y="513" width="3" height="4" fill="#d86060"/><rect x="544" y="515" width="3" height="2" fill="#d86060"/><rect x="550" y="514" width="3" height="3" fill="#60d860"/><rect x="555" y="515" width="3" height="2" fill="#60d860"/><rect x="560" y="513" width="3" height="4" fill="#60d860"/><rect x="566" y="513" width="3" height="4" fill="#60d860"/><rect x="571" y="514" width="3" height="3" fill="#d86060"/><rect x="576" y="514" width="3" height="3" fill="#60d860"/><rect x="582" y="506" width="3" height="11" fill="#d86060"/><rect x="587" y="514" width="3" height="3" fill="#d86060"/><rect x="592" y="512" width="3" height="5" fill="#d86060"/><rect x="597" y="515" width="3" height="2" fill="#60d860"/><rect x="603" y="514" width="3" height="3" fill="#d86060"/><rect x="608" y="512" width="3" height="5" fill="#d86060"/><rect x="613" y="514" width="3" height="3" fill="#60d860"/><rect x="619" y="514" width="3" height="3" fill="#d86060"/><rect x="624" y="513" width="3" height="4" fill="#d86060"/><rect x="629" y="511" width="3" height="6" fill="#60d860"/><rect x="635" y="511" width="3" height="6" fill="#60d860"/><rect x="640" y="513" width="3" height="4" fill="#60d860"/><rect x="645" y="496" width="3" height="21" fill="#60d860"/><rect x="650" y="496" width="3" height="21" fill="#60d860"/><rect x="656" y="506" width="3" height="11" fill="#d86060"/><rect x="661" y="513" width="3" height="4" fill="#60d860"/><rect x="666" y="512" width="3" height="5" fill="#d86060"/><rect x="672" y="512" width="3" height="5" fill="#60d860"/><rect x="677" y="514" width="3" height="3" fill="#d86060"/><rect x="682" y="511" width="3" height="6" fill="#d86060"/><rect x="688" y="513" width="3" height="4" fill="#d86060"/><rect x="693" y="513" width="3" height="4" fill="#d86060"/><rect x="698" y="513" width="3" height="4" fill="#60d860"/><rect x="703" y="512" width="3" height="5" fill="#d86060"/><rect x="709" y="512" width="3" height="5" fill="#60d860"/><rect x="714" y="513" width="3" height="4" fill="#d86060"/><rect x="719" y="513" width="3" height="4" fill="#60d860"/><rect x="725" y="514" width="3" height="3" fill="#60d860"/><rect x="730" y="513" width="3" height="4" fill="#d86060"/><rect x="735" y="513" width="3" height="4" fill="#d86060"/><rect x="741" y="507" width="3" height="10" fill="#d86060"/><rect x="746" y="494" width="3" height="23" fill="#d86060"/><rect x="751" y="507" width="3" height="10" fill="#d86060"/><rect x="757" y="506" width="3" height="11" fill="#60d860"/><rect x="762" y="509" width="3" height="8" fill="#60d860"/><rect x="767" y="503" width="3" height="14" fill="#60d860"/><rect x="772" y="508" width="3" height="9" fill="#d86060"/><rect x="778" y="508" width="3" height="9" fill="#60d860"/><rect x="783" y="512" width="3" height="5" fill="#60d860"/><rect x="788" y="510" width="3" height="7" fill="#60d860"/><rect x="794" y="509" width="3" height="8" fill="#60d860"/><rect x="799" y="507" width="3" height="10" fill="#60d860"/><rect x="804" y="512" width="3" height="5" fill="#d86060"/><rect x="810" y="510" width="3" height="7" fill="#60d860"/><rect x="815" y="512" width="3" height="5" fill="#d86060"/><rect x="820" y="511" width="3" height="6" fill="#d86060"/><rect x="825" y="510" width="3" height="7" fill="#d86060"/><rect x="831" y="512" width="3" height="5" fill="#d86060"/><rect x="836" y="511" width="3" height="6" fill="#60d860"/><rect x="841" y="513" width="3" height="4" fill="#d86060"/><rect x="847" y="513" width="3" height="4" fill="#60d860"/><rect x="852" y="485" width="3" height="32" fill="#d86060"/><rect x="857" y="510" width="3" height="7" fill="#60d860"/><rect x="863" y="508" width="3" height="9" fill="#d86060"/><rect x="868" y="510" width="3" height="7" fill="#d86060"/><rect x="873" y="513" width="3" height="4" fill="#60d860"/><rect x="878" y="502" width="3" height="15" fill="#d86060"/><rect x="884" y="511" width="3" height="6" fill="#d86060"/><rect x="889" y="509" width="3" height="8" fill="#d86060"/><rect x="894" y="509" width="3" height="8" fill="#d86060"/></g>
<rect x="3.5" y="424.5" width="7" height="7" fill="#d86060" stroke="#000" stroke-width="1" shape-rendering="crispEdges"/>
<g shape-rendering="crispEdges"><rect x="2" y="581" width="897" height="1" fill="#dcdcdc"/><rect x="2" y="620" width="897" height="1" fill="#dcdcdc"/><rect x="116" y="541" width="1" height="120" fill="#dcdcdc"/><rect x="233" y="541" width="1" height="120" fill="#dcdcdc"/><rect x="355" y="541" width="1" height="120" fill="#dcdcdc"/><rect x="461" y="541" width="1" height="120" fill="#dcdcdc"/><rect x="561" y="541" width="1" height="120" fill="#dcdcdc"/><rect x="673" y="541" width="1" height="120" fill="#dcdcdc"/><rect x="779" y="541" width="1" height="120" fill="#dcdcdc"/><rect x="2" y="541" width="897" height="1" fill="#dcdcdc"/><rect x="2" y="660" width="897" height="1" fill="#dcdcdc"/><rect x="2" y="541" width="1" height="120" fill="#dcdcdc"/><rect x="898" y="541" width="1" height="120" fill="#dcdcdc"/></g>
<g shape-rendering="crispEdges"><rect x="4" y="617" width="3" height="4" fill="#008000"/><rect x="9" y="620" width="3" height="1" fill="#008000"/><rect x="14" y="620" width="3" height="3" fill="#008000"/><rect x="20" y="620" width="3" height="5" fill="#008000"/><rect x="25" y="620" width="3" height="7" fill="#008000"/><rect x="30" y="620" width="3" height="8" fill="#008000"/><rect x="35" y="620" width="3" height="7" fill="#008000"/><rect x="41" y="620" width="3" height="7" fill="#008000"/><rect x="46" y="620" width="3" height="7" fill="#008000"/><rect x="51" y="620" width="3" height="8" fill="#008000"/><rect x="57" y="620" width="3" height="11" fill="#008000"/><rect x="62" y="620" width="3" height="12" fill="#008000"/><rect x="67" y="620" width="3" height="12" fill="#008000"/><rect x="73" y="620" width="3" height="12" fill="#008000"/><rect x="78" y="620" width="3" height="13" fill="#008000"/><rect x="83" y="620" width="3" height="14" fill="#008000"/><rect x="88" y="620" width="3" height="15" fill="#008000"/><rect x="94" y="620" width="3" height="15" fill="#008000"/><rect x="99" y="620" width="3" height="15" fill="#008000"/><rect x="104" y="620" width="3" height="17" fill="#008000"/><rect x="110" y="620" width="3" height="16" fill="#008000"/><rect x="115" y="620" width="3" height="17" fill="#008000"/><rect x="120" y="620" width="3" height="18" fill="#008000"/><rect x="126" y="620" width="3" height="18" fill="#008000"/><rect x="131" y="620" width="3" height="17" fill="#008000"/><rect x="136" y="620" width="3" height="15" fill="#008000"/><rect x="141" y="620" width="3" height="14" fill="#008000"/><rect x="147" y="620" width="3" height="11" fill="#008000"/><rect x="152" y="620" width="3" height="8" fill="#008000"/><rect x="157" y="620" width="3" height="6" fill="#008000"/><rect x="163" y="620" width="3" height="3" fill="#008000"/><rect x="168" y="619" width="3" height="2" fill="#008000"/><rect x="173" y="618" width="3" height="3" fill="#008000"/><rect x="179" y="617" width="3" height="4" fill="#008000"/><rect x="184" y="613" width="3" height="8" fill="#008000"/><rect x="189" y="611" width="3" height="10" fill="#008000"/><rect x="195" y="610" width="3" height="11" fill="#008000"/><rect x="200" y="609" width="3" height="12" fill="#008000"/><rect x="205" y="608" width="3" height="13" fill="#008000"/><rect x="210" y="608" width="3" height="13" fill="#008000"/><rect x="216" y="608" width="3" height="13" fill="#008000"/><rect x="221" y="609" width="3" height="12" fill="#008000"/><rect x="226" y="610" width="3" height="11" fill="#008000"/><rect x="232" y="612" width="3" height="9" fill="#008000"/><rect x="237" y="613" width="3" height="8" fill="#008000"/><rect x="242" y="613" width="3" height="8" fill="#008000"/><rect x="248" y="613" width="3" height="8" fill="#008000"/><rect x="253" y="613" width="3" height="8" fill="#008000"/><rect x="258" y="611" width="3" height="10" fill="#008000"/><rect x="263" y="609" width="3" height="12" fill="#008000"/><rect x="269" y="609" width="3" height="12" fill="#008000"/><rect x="274" y="611" width="3" height="10" fill="#008000"/><rect x="279" y="615" width="3" height="6" fill="#008000"/><rect x="285" y="620" width="3" height="1" fill="#008000"/><rect x="290" y="620" width="3" height="5" fill="#008000"/><rect x="295" y="620" width="3" height="9" fill="#008000"/><rect x="301" y="620" width="3" height="9" fill="#008000"/><rect x="306" y="619" width="3" height="2" fill="#008000"/><rect x="311" y="614" width="3" height="7" fill="#008000"/><rect x="316" y="611" width="3" height="10" fill="#008000"/><rect x="322" y="609" width="3" height="12" fill="#008000"/><rect x="327" y="609" width="3" height="12" fill="#008000"/><rect x="332" y="611" width="3" height="10" fill="#008000"/><rect x="338" y="615" width="3" height="6" fill="#008000"/><rect x="343" y="619" width="3" height="2" fill="#008000"/><rect x="348" y="620" width="3" height="4" fill="#008000"/><rect x="354" y="620" width="3" height="7" fill="#008000"/><rect x="359" y="620" width="3" height="10" fill="#008000"/><rect x="364" y="620" width="3" height="11" fill="#008000"/><rect x="369" y="620" width="3" height="13" fill="#008000"/><rect x="375" y="620" width="3" height="15" fill="#008000"/><rect x="380" y="620" width="3" height="15" fill="#008000"/><rect x="385" y="620" width="3" height="15" fill="#008000"/><rect x="391" y="620" width="3" height="15" fill="#008000"/><rect x="396" y="620" width="3" height="14" fill="#008000"/><rect x="401" y="620" width="3" height="15" fill="#008000"/><rect x="407" y="620" width="3" height="14" fill="#008000"/><rect x="412" y="620" width="3" height="13" fill="#008000"/><rect x="417" y="620" width="3" height="11" fill="#008000"/><rect x="422" y="620" width="3" height="8" fill="#008000"/><rect x="428" y="620" width="3" height="8" fill="#008000"/><rect x="433" y="620" width="3" height="6" fill="#008000"/><rect x="438" y="620" width="3" height="7" fill="#008000"/><rect x="444" y="620" width="3" height="7" fill="#008000"/><rect x="449" y="620" width="3" height="8" fill="#008000"/><rect x="454" y="620" width="3" height="8" fill="#008000"/><rect x="460" y="620" width="3" height="10" fill="#008000"/><rect x="465" y="620" width="3" height="10" fill="#008000"/><rect x="470" y="620" width="3" height="9" fill="#008000"/><rect x="476" y="620" width="3" height="5" fill="#008000"/><rect x="481" y="620" width="3" height="3" fill="#008000"/><rect x="486" y="618" width="3" height="3" fill="#008000"/><rect x="491" y="615" width="3" height="6" fill="#008000"/><rect x="497" y="615" width="3" height="6" fill="#008000"/><rect x="502" y="617" width="3" height="4" fill="#008000"/><rect x="507" y="619" width="3" height="2" fill="#008000"/><rect x="513" y="620" width="3" height="1" fill="#008000"/><rect x="518" y="620" width="3" height="1" fill="#008000"/><rect x="523" y="620" width="3" height="3" fill="#008000"/><rect x="529" y="620" width="3" height="2" fill="#008000"/><rect x="534" y="620" width="3" height="1" fill="#008000"/><rect x="539" y="620" width="3" height="1" fill="#008000"/><rect x="544" y="620" width="3" height="1" fill="#008000"/><rect x="550" y="620" width="3" height="1" fill="#008000"/><rect x="555" y="620" width="3" height="1" fill="#008000"/><rect x="560" y="618" width="3" height="3" fill="#008000"/><rect x="566" y="616" width="3" height="5" fill="#008000"/><rect x="571" y="615" width="3" height="6" fill="#008000"/><rect x="576" y="613" width="3" height="8" fill="#008000"/><rect x="582" y="615" width="3" height="6" fill="#008000"/><rect x="587" y="615" width="3" height="6" fill="#008000"/><rect x="592" y="617" width="3" height="4" fill="#008000"/><rect x="597" y="617" width="3" height="4" fill="#008000"/><rect x="603" y="620" width="3" height="1" fill="#008000"/><rect x="608" y="620" width="3" height="3" fill="#008000"/><rect x="613" y="620" width="3" height="3" fill="#008000"/><rect x="619" y="620" width="3" height="5" fill="#008000"/><rect x="624" y="620" width="3" height="5" fill="#008000"/><rect x="629" y="620" width="3" height="3" fill="#008000"/><rect x="635" y="619" width="3" height="2" fill="#008000"/><rect x="640" y="617" width="3" height="4" fill="#008000"/><rect x="645" y="613" width="3" height="8" fill="#008000"/><rect x="650" y="609" width="3" height="12" fill="#008000"/><rect x="656" y="611" width="3" height="10" fill="#008000"/><rect x="661" y="613" width="3" height="8" fill="#008000"/><rect x="666" y="615" width="3" height="6" fill="#008000"/><rect x="672" y="615" width="3" height="6" fill="#008000"/><rect x="677" y="617" width="3" height="4" fill="#008000"/><rect x="682" y="620" width="3" height="1" fill="#008000"/><rect x="688" y="620" width="3" height="5" fill="#008000"/><rect x="693" y="620" width="3" height="7" fill="#008000"/><rect x="698" y="620" width="3" height="6" fill="#008000"/><rect x="703" y="620" width="3" height="6" fill="#008000"/><rect x="709" y="620" width="3" height="5" fill="#008000"/><rect x="714" y="620" width="3" height="6" fill="#008000"/><rect x="719" y="620" width="3" height="5" fill="#008000"/><rect x="725" y="620" width="3" height="4" fill="#008000"/><rect x="730" y="620" width="3" height="3" fill="#008000"/><rect x="735" y="620" width="3" height="3" fill="#008000"/><rect x="741" y="620" width="3" height="4" fill="#008000"/><rect x="746" y="620" width="3" height="7" fill="#008000"/><rect x="751" y="620" width="3" height="8" fill="#008000"/><rect x="757" y="620" width="3" height="9" fill="#008000"/><rect x="762" y="620" width="3" height="8" fill="#008000"/><rect x="767" y="620" width="3" height="7" fill="#008000"/><rect x="772" y="620" width="3" height="7" fill="#008000"/><rect x="778" y="620" width="3" height="6" fill="#008000"/><rect x="783" y="620" width="3" height="5" fill="#008000"/><rect x="788" y="620" width="3" height="4" fill="#008000"/><rect x="794" y="620" width="3" height="3" fill="#008000"/><rect x="799" y="620" width="3" height="2" fill="#008000"/><rect x="804" y="620" width="3" height="1" fill="#008000"/><rect x="810" y="620" width="3" height="1" fill="#008000"/><rect x="815" y="620" width="3" height="1" fill="#008000"/><rect x="820" y="620" width="3" height="1" fill="#008000"/><rect x="825" y="620" width="3" height="3" fill="#008000"/><rect x="831" y="620" width="3" height="5" fill="#008000"/><rect x="836" y="620" width="3" height="5" fill="#008000"/><rect x="841" y="620" width="3" height="5" fill="#008000"/><rect x="847" y="620" width="3" height="5" fill="#008000"/><rect x="852" y="620" width="3" height="5" fill="#008000"/><rect x="857" y="620" width="3" height="4" fill="#008000"/><rect x="863" y="620" width="3" height="4" fill="#008000"/><rect x="868" y="620" width="3" height="4" fill="#008000"/><rect x="873" y="620" width="3" height="4" fill="#008000"/><rect x="878" y="620" width="3" height="4" fill="#008000"/><rect x="884" y="620" width="3" height="5" fill="#008000"/><rect x="889" y="620" width="3" height="6" fill="#008000"/><rect x="894" y="620" width="3" height="8" fill="#008000"/></g>
<path fill="none" stroke="#ff00ff" stroke-width="1.05" d="M5.5,569.3C7.9,569.6 15.1,570.3 20.0,571.3C24.9,572.3 29.6,574.0 35.0,575.5C40.4,577.0 47.1,578.0 52.5,580.0C57.9,582.0 62.1,584.7 67.5,587.5C72.9,590.3 79.6,593.8 85.0,597.0C90.4,600.2 95.0,603.4 100.0,606.8C105.0,610.2 110.0,613.8 115.0,617.5C120.0,621.2 125.8,626.2 130.0,629.3C134.2,632.4 136.7,634.4 140.0,636.3C143.3,638.2 146.2,639.4 150.0,640.5C153.8,641.6 158.3,642.8 162.5,643.0C166.7,643.2 170.4,643.0 175.0,642.0C179.6,641.0 185.0,639.2 190.0,637.0C195.0,634.8 200.0,631.7 205.0,628.8C210.0,625.9 215.8,622.0 220.0,619.5C224.2,617.0 225.8,615.7 230.0,613.8C234.2,611.9 240.0,610.0 245.0,608.0C250.0,606.0 255.4,604.1 260.0,601.8C264.6,599.5 268.9,596.0 272.5,594.3C276.1,592.6 278.4,592.1 281.3,591.8C284.2,591.5 286.5,591.8 290.0,592.5C293.5,593.2 298.8,596.1 302.5,596.3C306.2,596.5 308.8,595.3 312.5,593.8C316.2,592.3 320.8,589.5 325.0,587.5C329.2,585.5 333.9,582.9 337.5,581.8C341.1,580.7 343.4,580.7 346.3,580.8C349.2,580.9 351.1,581.2 355.0,582.5C358.9,583.8 365.0,586.1 370.0,588.8C375.0,591.5 380.0,595.5 385.0,598.8C390.0,602.1 395.4,606.0 400.0,608.8C404.6,611.6 408.3,613.8 412.5,615.8C416.7,617.8 420.8,619.1 425.0,620.5C429.2,621.9 433.3,623.0 437.5,624.3C441.7,625.6 446.2,627.0 450.0,628.3C453.8,629.6 456.7,630.7 460.0,632.0C463.3,633.3 466.7,635.4 470.0,636.3C473.3,637.2 476.2,637.7 480.0,637.5C483.8,637.3 488.3,635.8 492.5,635.0C496.7,634.2 500.4,633.5 505.0,633.0C509.6,632.5 515.0,632.0 520.0,631.8C525.0,631.6 530.4,632.1 535.0,632.0C539.6,631.9 543.3,631.5 547.5,631.3C551.7,631.0 555.8,631.2 560.0,630.5C564.2,629.8 568.3,628.2 572.5,627.0C576.7,625.8 580.8,624.2 585.0,623.3C589.2,622.3 593.3,621.7 597.5,621.3C601.7,620.9 605.8,620.6 610.0,620.8C614.2,621.0 618.8,622.1 622.5,622.5C626.2,622.9 629.2,623.3 632.5,623.0C635.8,622.7 638.8,621.8 642.5,620.5C646.2,619.2 650.8,616.7 655.0,615.0C659.2,613.3 663.3,611.7 667.5,610.5C671.7,609.3 676.7,608.3 680.0,608.0C683.3,607.7 684.2,608.1 687.5,608.8C690.8,609.5 695.0,610.9 700.0,612.0C705.0,613.1 711.7,614.7 717.5,615.5C723.3,616.3 730.0,616.3 735.0,617.0C740.0,617.7 742.9,618.2 747.5,619.5C752.1,620.8 757.5,623.5 762.5,625.0C767.5,626.5 772.5,627.4 777.5,628.3C782.5,629.2 787.5,630.2 792.5,630.5C797.5,630.8 802.7,630.2 807.5,630.0C812.3,629.8 816.7,629.2 821.3,629.5C825.9,629.8 830.2,631.1 835.0,632.0C839.8,632.9 845.0,634.2 850.0,635.0C855.0,635.8 860.0,636.2 865.0,636.8C870.0,637.3 875.8,637.8 880.0,638.3C884.2,638.8 887.4,639.4 890.0,640.0C892.6,640.6 894.6,641.7 895.5,642.0"/>
<path fill="none" stroke="#0000ff" stroke-width="1.05" d="M5.5,566.8C7.1,567.8 10.5,570.2 15.0,572.5C19.5,574.8 27.9,579.0 32.5,580.8C37.1,582.5 39.2,582.0 42.5,583.0C45.8,584.0 49.6,585.3 52.5,587.0C55.4,588.7 56.2,590.8 60.0,593.3C63.8,595.8 70.8,599.2 75.0,601.8C79.2,604.4 81.7,606.3 85.0,608.8C88.3,611.3 91.7,614.3 95.0,617.0C98.3,619.7 101.7,622.4 105.0,625.0C108.3,627.6 111.7,629.8 115.0,632.5C118.3,635.2 121.7,638.7 125.0,641.3C128.3,643.9 131.9,646.4 135.0,648.0C138.1,649.6 141.3,650.5 143.8,650.8C146.3,651.0 147.3,650.1 150.0,649.5C152.7,648.9 156.7,648.2 160.0,647.0C163.3,645.8 166.7,643.8 170.0,642.0C173.3,640.2 177.3,638.3 180.0,636.3C182.7,634.3 183.0,632.7 186.3,630.0C189.6,627.3 195.6,623.3 200.0,620.0C204.4,616.7 208.8,612.5 212.5,610.0C216.2,607.5 219.6,606.0 222.5,605.0C225.4,604.0 227.1,604.3 230.0,603.8C232.9,603.3 236.0,603.2 240.0,601.8C244.0,600.4 249.6,598.2 253.8,595.5C258.0,592.8 262.1,587.5 265.0,585.5C267.9,583.5 268.8,583.5 271.3,583.5C273.8,583.5 277.1,583.8 280.0,585.5C282.9,587.2 285.9,591.0 288.8,593.8C291.7,596.5 295.3,600.4 297.5,602.0C299.7,603.6 299.5,606.0 302.0,603.5C304.5,601.0 309.3,591.1 312.5,587.0C315.7,582.9 318.6,581.1 321.3,578.8C324.0,576.5 326.5,574.2 328.8,573.3C331.1,572.4 332.7,572.9 335.0,573.5C337.3,574.1 340.0,575.3 342.5,577.0C345.0,578.7 347.5,581.4 350.0,583.8C352.5,586.2 354.4,588.6 357.5,591.3C360.6,594.0 365.7,597.2 368.8,600.0C371.9,602.8 374.2,606.3 376.3,608.0C378.4,609.7 378.6,608.4 381.3,610.0C384.0,611.6 389.4,615.6 392.5,617.5C395.6,619.4 397.9,620.0 400.0,621.3C402.1,622.6 402.7,624.1 405.0,625.5C407.3,626.9 411.3,629.0 413.8,629.5C416.3,630.0 418.1,629.1 420.0,628.8C421.9,628.5 422.5,627.4 425.0,627.5C427.5,627.6 431.7,628.5 435.0,629.3C438.3,630.1 441.7,631.2 445.0,632.5C448.3,633.8 452.5,635.8 455.0,637.0C457.5,638.2 458.1,639.0 460.0,640.0C461.9,641.0 464.4,642.7 466.3,643.3C468.2,643.9 468.6,645.0 471.3,643.8C474.0,642.6 479.0,638.6 482.5,636.3C486.0,634.0 489.8,631.3 492.5,630.0C495.2,628.7 496.9,628.6 498.8,628.3C500.7,628.0 501.9,628.0 503.8,628.3C505.7,628.6 507.5,629.5 510.0,630.0C512.5,630.5 516.3,630.7 518.8,631.3C521.3,631.9 522.3,633.8 525.0,633.8C527.7,633.8 531.2,631.8 535.0,631.3C538.8,630.8 544.0,630.8 547.5,630.5C551.0,630.2 553.4,630.5 556.3,629.5C559.2,628.5 561.9,626.3 565.0,624.5C568.1,622.7 572.1,620.0 575.0,618.8C577.9,617.5 580.0,617.2 582.5,617.0C585.0,616.8 587.3,617.4 590.0,617.5C592.7,617.6 595.9,616.9 598.8,617.5C601.7,618.1 604.6,620.5 607.5,621.3C610.4,622.1 613.4,621.5 616.3,622.5C619.2,623.5 621.9,627.1 625.0,627.0C628.1,626.9 631.9,624.1 635.0,622.0C638.1,619.9 641.1,617.1 643.8,614.5C646.5,611.9 648.6,608.0 651.3,606.3C654.0,604.6 657.3,604.9 660.0,604.5C662.7,604.1 665.2,604.1 667.5,603.8C669.8,603.5 671.9,602.6 673.8,602.5C675.7,602.4 676.7,602.0 678.8,603.3C680.9,604.5 683.8,607.8 686.3,610.0C688.8,612.2 689.8,615.0 693.8,616.3C697.8,617.5 706.5,616.9 710.0,617.5C713.5,618.1 712.1,619.9 715.0,620.0C717.9,620.1 723.3,618.3 727.5,618.3C731.7,618.3 736.2,618.5 740.0,620.0C743.8,621.5 746.9,625.7 750.0,627.5C753.1,629.3 755.5,630.0 758.8,630.8C762.1,631.6 766.0,632.1 770.0,632.5C774.0,632.9 778.3,633.5 782.5,633.3C786.7,633.1 790.4,631.9 795.0,631.3C799.6,630.7 805.6,629.8 810.0,629.5C814.4,629.2 817.5,628.5 821.3,629.3C825.0,630.1 829.0,633.2 832.5,634.5C836.0,635.8 839.2,636.3 842.5,637.0C845.8,637.7 849.6,638.6 852.5,638.8C855.4,639.0 857.1,637.9 860.0,638.0C862.9,638.1 866.7,638.8 870.0,639.3C873.3,639.8 876.7,639.9 880.0,640.8C883.3,641.7 887.4,643.2 890.0,644.5C892.6,645.8 894.6,648.1 895.5,648.8"/>
<rect x="3.5" y="528.5" width="7" height="7" fill="#0000ff" stroke="#000" stroke-width="1" shape-rendering="crispEdges"/>
<rect x="147.5" y="528.5" width="7" height="7" fill="#ff00ff" stroke="#000" stroke-width="1" shape-rendering="crispEdges"/>
<rect x="262.5" y="528.5" width="7" height="7" fill="#008000" stroke="#000" stroke-width="1" shape-rendering="crispEdges"/>
<g shape-rendering="crispEdges"><rect x="2" y="709" width="897" height="1" fill="#dcdcdc"/><rect x="2" y="733" width="897" height="1" fill="#dcdcdc"/><rect x="2" y="756" width="897" height="1" fill="#dcdcdc"/><rect x="2" y="780" width="897" height="1" fill="#dcdcdc"/><rect x="116" y="685" width="1" height="120" fill="#dcdcdc"/><rect x="233" y="685" width="1" height="120" fill="#dcdcdc"/><rect x="355" y="685" width="1" height="120" fill="#dcdcdc"/><rect x="461" y="685" width="1" height="120" fill="#dcdcdc"/><rect x="561" y="685" width="1" height="120" fill="#dcdcdc"/><rect x="673" y="685" width="1" height="120" fill="#dcdcdc"/><rect x="779" y="685" width="1" height="120" fill="#dcdcdc"/><rect x="2" y="685" width="897" height="1" fill="#dcdcdc"/><rect x="2" y="804" width="897" height="1" fill="#dcdcdc"/><rect x="2" y="685" width="1" height="120" fill="#dcdcdc"/><rect x="898" y="685" width="1" height="120" fill="#dcdcdc"/></g>
<polygon fill="#ff6060" points="245.4,721.5 249.5,718.3 254.5,718.5 259.5,711.5 264.5,708.3 270.5,716.3 274.0,721.5"/><polygon fill="#ff6060" points="307.4,721.5 307.5,721.3 312.5,719.5 317.5,720.5 323.5,720.0 328.5,718.8 330.1,721.5"/>
<polygon fill="#6060ff" points="117.9,768.5 121.5,771.0 127.5,771.3 132.5,773.8 137.5,771.8 142.5,770.5 143.9,768.5"/><polygon fill="#6060ff" points="880.1,768.5 885.5,773.3 890.5,773.8 895.5,781.3 895.5,768.5"/>
<g shape-rendering="crispEdges"><rect x="2" y="721" width="897" height="1" fill="#ff6060"/><rect x="2" y="768" width="897" height="1" fill="#6060ff"/></g>
<polyline fill="none" stroke="#800080" stroke-width="1.1" stroke-linejoin="round" points="5.5,723.8 10.5,728.8 15.5,727.0 21.5,729.5 26.5,729.0 31.5,731.3 36.5,725.8 42.5,727.5 47.5,728.0 52.5,733.0 58.5,745.0 63.5,741.0 68.5,741.3 74.5,742.5 79.5,748.8 84.5,747.8 89.5,755.0 95.5,756.5 100.5,757.5 105.5,763.8 111.5,761.8 116.5,767.5 121.5,771.0 127.5,771.3 132.5,773.8 137.5,771.8 142.5,770.5 148.5,762.0 153.5,756.3 158.5,759.0 164.5,753.0 169.5,749.5 174.5,747.5 180.5,745.5 185.5,730.5 190.5,735.3 196.5,732.0 201.5,730.0 206.5,726.3 211.5,724.5 217.5,725.0 222.5,726.8 227.5,725.8 233.5,730.8 238.5,727.0 243.5,723.0 249.5,718.3 254.5,718.5 259.5,711.5 264.5,708.3 270.5,716.3 275.5,723.8 280.5,730.8 286.5,746.3 291.5,745.3 296.5,750.5 302.5,741.3 307.5,721.3 312.5,719.5 317.5,720.5 323.5,720.0 328.5,718.8 333.5,727.5 339.5,731.3 344.5,735.0 349.5,741.3 355.5,743.8 360.5,743.5 365.5,743.0 370.5,746.8 376.5,754.3 381.5,745.5 386.5,750.3 392.5,752.0 397.5,749.5 402.5,756.3 408.5,752.0 413.5,753.8 418.5,748.0 423.5,745.3 429.5,750.5 434.5,749.0 439.5,755.3 445.5,752.8 450.5,757.0 455.5,757.5 461.5,763.0 466.5,763.0 471.5,757.5 477.5,746.3 482.5,745.5 487.5,740.8 492.5,741.3 498.5,744.0 503.5,749.0 508.5,754.3 514.5,751.3 519.5,754.0 524.5,757.5 530.5,748.3 535.5,746.3 540.5,749.5 545.5,750.3 551.5,749.8 556.5,748.5 561.5,741.0 567.5,735.5 572.5,736.3 577.5,733.5 583.5,741.5 588.5,742.0 593.5,742.8 598.5,742.3 604.5,752.5 609.5,753.8 614.5,747.5 620.5,753.8 625.5,758.3 630.5,741.3 636.5,735.8 641.5,734.0 646.5,724.5 651.5,724.5 657.5,736.3 662.5,734.3 667.5,737.0 673.5,733.3 678.5,738.0 683.5,749.5 689.5,752.5 694.5,753.3 699.5,743.0 704.5,745.0 710.5,742.5 715.5,750.3 720.5,743.3 726.5,741.5 731.5,745.0 736.5,745.8 742.5,750.0 747.5,755.5 752.5,757.5 758.5,756.0 763.5,752.5 768.5,752.0 773.5,754.5 779.5,753.3 784.5,752.5 789.5,749.8 795.5,749.3 800.5,748.5 805.5,751.0 811.5,748.0 816.5,752.0 821.5,752.5 826.5,763.0 832.5,765.0 837.5,763.0 842.5,764.8 848.5,764.0 853.5,765.5 858.5,757.5 864.5,762.5 869.5,765.3 874.5,764.5 879.5,768.0 885.5,773.3 890.5,773.8 895.5,781.3"/>
<rect x="3.5" y="672.5" width="7" height="7" fill="#800080" stroke="#000" stroke-width="1" shape-rendering="crispEdges"/>
<g class="k" style="will-change:transform"><text x="902" y="30">110</text><text x="902" y="55">105</text><text x="902" y="81">100</text><text x="902" y="108">95</text><text x="902" y="137">90</text><text x="902" y="168">85</text><text x="902" y="200">80</text><text x="902" y="235">75</text><text x="902" y="271">70</text><text x="902" y="311">65</text><text x="902" y="354">60</text><text x="117" y="413" text-anchor="middle">Sep.</text><text x="234" y="413" text-anchor="middle">Okt.</text><text x="356" y="413" text-anchor="middle">Nov.</text><text x="462" y="413" text-anchor="middle">Dez.</text><text x="562" y="413" text-anchor="middle">Jan.</text><text x="674" y="413" text-anchor="middle">Feb.</text><text x="780" y="413" text-anchor="middle">März</text><text y="10"><tspan x="14.87" style="letter-spacing:-0.109px">Friedrich</tspan><tspan x="60.28" style="letter-spacing:0.347px">Vorwerk</tspan><tspan x="105.9" style="letter-spacing:-0.33px">Group</tspan><tspan x="139.1" style="letter-spacing:-0.9px">SE</tspan><tspan x="155.28" style="letter-spacing:-0.03px">(Xetra)</tspan></text><text y="10"><tspan x="225.2" style="letter-spacing:-0.9px">GD</tspan><tspan x="243.1" style="letter-spacing:-0.35px">38</tspan><tspan x="258.05" style="letter-spacing:-0.395px">Tage:</tspan><tspan x="287.68" style="letter-spacing:-0.1px">79,621</tspan></text><text y="10"><tspan x="357.3" style="letter-spacing:-0.9px">GD</tspan><tspan x="375.42" style="letter-spacing:-0.2px">100</tspan><tspan x="396.45" style="letter-spacing:-0.395px">Tage:</tspan><tspan x="425.6" style="letter-spacing:-0.064px">82,842</tspan></text><text x="902" y="441" style="letter-spacing:-0.6px">60M</text><text x="902" y="467" style="letter-spacing:-0.6px">40M</text><text x="902" y="494" style="letter-spacing:-0.6px">20M</text><text x="902" y="520" style="letter-spacing:-0.6px">0M</text><text y="432"><tspan x="14.87" style="letter-spacing:-0.109px">Friedrich</tspan><tspan x="60.28" style="letter-spacing:0.347px">Vorwerk</tspan><tspan x="105.9" style="letter-spacing:-0.33px">Group</tspan><tspan x="139.1" style="letter-spacing:-0.9px">SE</tspan><tspan x="156.08" style="letter-spacing:-0.403px">Volumen</tspan><tspan x="199.85" style="letter-spacing:-0.42px">in</tspan><tspan x="210.82" style="letter-spacing:-0.327px">Euro</tspan></text><text x="902" y="545">10</text><text x="902" y="585">5</text><text x="902" y="624">0</text><text x="902" y="664">-5</text><text y="536"><tspan x="14.87" style="letter-spacing:-0.75px">MACD</tspan><tspan x="48.33" style="letter-spacing:-0.043px">(26,</tspan><tspan x="69.82" style="letter-spacing:-0.173px">12):</tspan><tspan x="92.3" style="letter-spacing:-0.104px">-3,562</tspan></text><text y="536"><tspan x="158.52" style="letter-spacing:-1.16px">EXP</tspan><tspan x="181.28" style="letter-spacing:0.007px">(9):</tspan><tspan x="201.2" style="letter-spacing:-0.063px">-2,6843</tspan></text><text y="536"><tspan x="274.22" style="letter-spacing:-0.225px">Divergence:</tspan><tspan x="334.9" style="letter-spacing:-0.083px">-0,87769</tspan></text><text x="902" y="689" style="fill:#000;stroke:#000">100</text><text x="902" y="713" style="fill:#000;stroke:#000">80</text><text x="902" y="725" style="fill:#ff6060;stroke:#ff6060">70</text><text x="902" y="737" style="fill:#000;stroke:#000">60</text><text x="902" y="760" style="fill:#000;stroke:#000">40</text><text x="902" y="772" style="fill:#6060ff;stroke:#6060ff">30</text><text x="902" y="784" style="fill:#000;stroke:#000">20</text><text x="902" y="808" style="fill:#000;stroke:#000">0</text><text y="680"><tspan x="14.72" style="letter-spacing:-0.725px">RSI</tspan><tspan x="34.08" style="letter-spacing:0.125px">(14):</tspan><tspan x="60.12" style="letter-spacing:-0.21px">19,179</tspan></text></g>
<g shape-rendering="crispEdges"><rect x="448" y="225" width="492" height="3" fill="#ff8020"/><rect x="440" y="234" width="500" height="3" fill="#ff8020"/><rect x="119" y="316" width="821" height="3" fill="#ff8020"/></g>
</svg></body></html>
